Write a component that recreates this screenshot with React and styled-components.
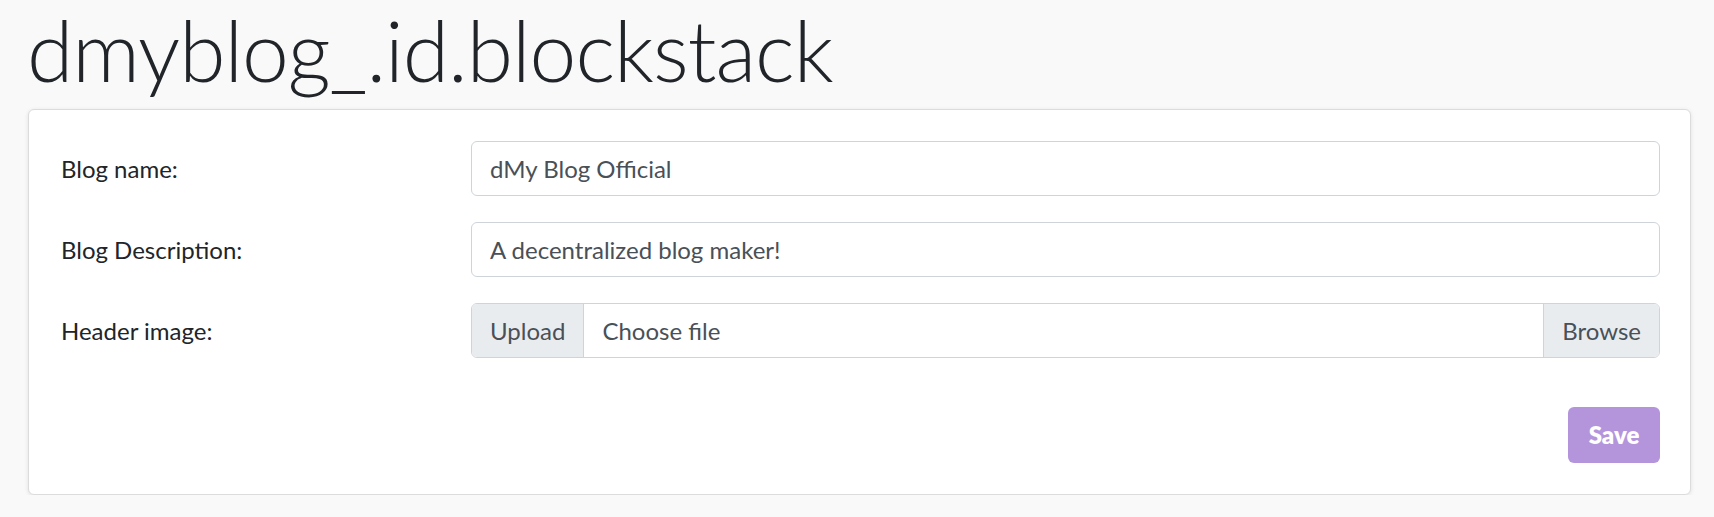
import styled, { createGlobalStyle } from "styled-components"

const GlobalStyle = createGlobalStyle`
body {
  margin: 0;
  background-color: #f9f9f9;
  font-family: Lato, "Open Sans", sans-serif;
  color: #212529;
}
`

const Page = styled.div`
padding: 0 23px 0 28px;
`

const Title = styled.h1`
margin: 0 0 8px -1px;
font-size: 84px;
font-weight: 300;
line-height: 1.2;
letter-spacing: -1px;
color: #212529;
`

const Card = styled.div`
background-color: white;
border: 1px solid #dcdcdc;
border-radius: 6px;
box-shadow: 0 1px 4px rgba(0, 0, 0, 0.1);
padding: 31px 30px 31px 30px;
`

const Form = styled.form`
display: flex;
flex-direction: column;
gap: 26px;
`

const Row = styled.div`
display: grid;
grid-template-columns: 412px 1fr;
align-items: center;
`

const Label = styled.label`
font-size: 24px;
padding-left: 2px;
color: #212529;
`

const Input = styled.input`
box-sizing: border-box;
height: 55px;
width: 100%;
padding: 0 18px;
border: 1px solid #ced4da;
border-radius: 6px;
font-family: inherit;
font-size: 24px;
color: #495057;
background-color: white;
outline: none;
`

const FileGroup = styled.div`
display: flex;
height: 55px;
box-sizing: border-box;
border: 1px solid #ced4da;
border-radius: 6px;
overflow: hidden;
font-size: 24px;
color: #495057;
`

const Addon = styled.span`
display: flex;
align-items: center;
padding: 0 18px;
background-color: ${props => props.$grey ? "#e9ecef" : "white"};
border-left: ${props => props.$borderLeft ? "1px solid #ced4da" : "none"};
border-right: ${props => props.$borderRight ? "1px solid #ced4da" : "none"};
flex-grow: ${props => props.$grow ? 1 : 0};
`

const Actions = styled.div`
display: flex;
justify-content: flex-end;
margin-top: 49px;
`

const SaveButton = styled.button`
width: 92px;
height: 56px;
border: none;
border-radius: 6px;
background-color: #b495db;
color: white;
font-family: inherit;
font-size: 24px;
font-weight: 800;
cursor: pointer;
`

function App() {
    return <>
        <GlobalStyle />
        <Page>
            <Title>dmyblog_.id.blockstack</Title>
            <Card>
                <Form onSubmit={e => e.preventDefault()}>
                    <Row>
                        <Label>Blog name:</Label>
                        <Input defaultValue="dMy Blog Official" />
                    </Row>
                    <Row>
                        <Label>Blog Description:</Label>
                        <Input defaultValue="A decentralized blog maker!" />
                    </Row>
                    <Row>
                        <Label>Header image:</Label>
                        <FileGroup>
                            <Addon $grey $borderRight>Upload</Addon>
                            <Addon $grow>Choose file</Addon>
                            <Addon $grey $borderLeft>Browse</Addon>
                        </FileGroup>
                    </Row>
                </Form>
                <Actions>
                    <SaveButton>Save</SaveButton>
                </Actions>
            </Card>
        </Page>
    </>
}

export default App
